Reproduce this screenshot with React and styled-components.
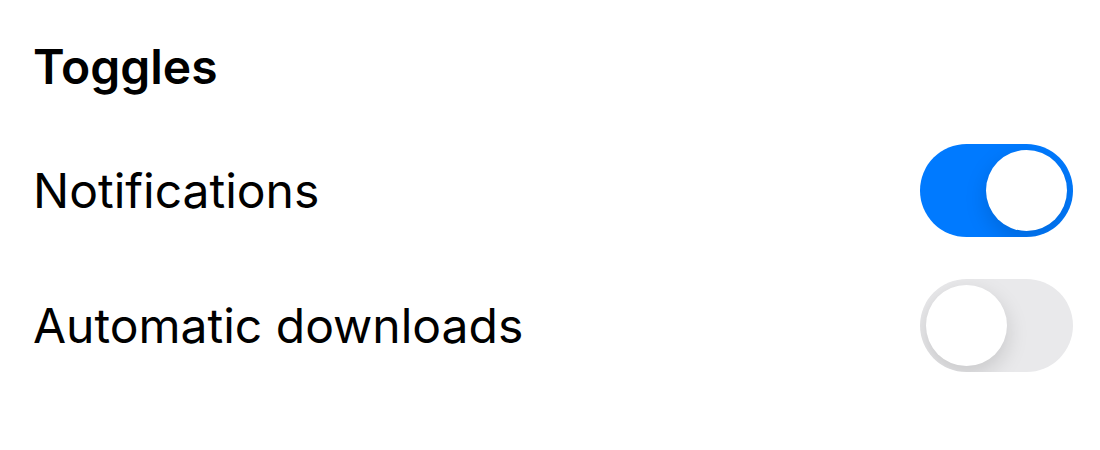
import React, { useState } from 'react';
import styled, { createGlobalStyle } from 'styled-components';

const GlobalStyle = createGlobalStyle`
    * {
        box-sizing: border-box;
    }
    body {
        margin: 0;
        background-color: #fff;
        color: #000;
        font-family: Inter, "Liberation Sans", sans-serif;
    }
`;
const Section = styled.section`
    padding: 36px 27px 36px 33px;
`;
const Title = styled.h1`
    margin: 0 0 46px;
    font-size: 48px;
    font-weight: 600;
    line-height: 62px;
`;
const List = styled.div`
    display: flex;
    flex-direction: column;
    gap: 42px;
`;
const Row = styled.label`
    display: flex;
    justify-content: space-between;
    align-items: center;
    cursor: pointer;
`;
const RowText = styled.span`
    font-size: 48px;
    line-height: 62px;
`;
const Switch = styled.input`
    appearance: none;
    flex: none;
    display: flex;
    width: 153px;
    height: 93px;
    margin: 0;
    padding: 6px;
    border-radius: 47px;
    background-color: #e9e9eb;
    overflow: hidden;
    cursor: pointer;
    transition: background-color 0.2s;

    &::before {
        content: '';
        width: 81px;
        height: 81px;
        border-radius: 50%;
        background-color: #fff;
        box-shadow: 0 8px 22px rgba(0, 0, 0, 0.15);
    }
    &:checked {
        justify-content: flex-end;
        background-color: #007aff;
    }
`;

const toggles = [
    { id: 'notifications', text: 'Notifications', on: true },
    { id: 'downloads', text: 'Automatic downloads', on: false }
];

const ToggleRow = ({ id, text, on }) => {

    const [checked, setChecked] = useState(on);

    return (
        <Row htmlFor={id}>
            <RowText>{text}</RowText>
            <Switch id={id} type="checkbox" role="switch"
                checked={checked}
                onChange={e => setChecked(e.target.checked)}
            />
        </Row>
    )
}

const App = () => (
    <>
        <GlobalStyle />
        <Section>
            <Title>Toggles</Title>
            <List>
                {toggles.map(item => <ToggleRow key={item.id} {...item} />)}
            </List>
        </Section>
    </>
)
export default App;
